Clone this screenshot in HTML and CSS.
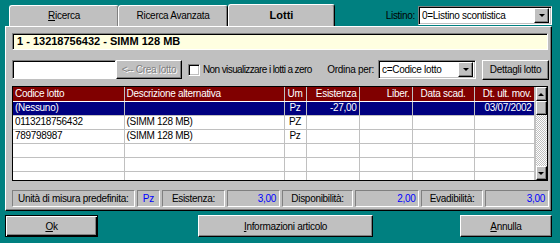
FILE: index.html
```html
<!DOCTYPE html>
<html lang="it">
<head>
    <meta charset="UTF-8">
    <title>Lotti</title>
    <link rel="stylesheet" href="styles.css">
</head>
<body>
    <div class="dialog">
        <div class="tabbar">
            <div class="tab"><u>R</u>icerca</div>
            <div class="tab">Ricerca Avanzata</div>
            <div class="tab active">Lotti</div>
            <div class="listino">
                <span>Listino:</span>
                <div class="combo wide">
                    <span class="combo-text">0=Listino scontistica</span>
                    <span class="drop"><i></i></span>
                </div>
            </div>
        </div>
        <div class="panel">
            <div class="article">1 - 13218756432 - SIMM 128 MB</div>
            <div class="toolbar">
                <div class="field"></div>
                <div class="btn disabled">&lt;-- Crea lotto</div>
                <label class="check"><span class="box"></span>Non visualizzare i lotti a zero</label>
                <span class="sort-label">Ordina per:</span>
                <div class="combo sort">
                    <span class="combo-text">c=Codice lotto</span>
                    <span class="drop"><i></i></span>
                </div>
                <div class="btn details">Dettagli lotto</div>
            </div>
            <div class="grid">
                <table>
                    <colgroup>
                        <col style="width:111px">
                        <col style="width:160px">
                        <col style="width:22px">
                        <col style="width:53px">
                        <col style="width:53px">
                        <col style="width:62px">
                        <col style="width:60px">
                    </colgroup>
                    <thead>
                        <tr>
                            <th>Codice lotto</th>
                            <th>Descrizione alternativa</th>
                            <th class="c">Um</th>
                            <th class="r">Esistenza</th>
                            <th class="r">Liber.</th>
                            <th class="c">Data scad.</th>
                            <th class="r">Dt. ult. mov.</th>
                        </tr>
                    </thead>
                    <tbody>
                        <tr class="sel">
                            <td>(Nessuno)</td><td></td><td class="c">Pz</td><td class="r">-27,00</td><td></td><td></td><td class="r">03/07/2002</td>
                        </tr>
                        <tr>
                            <td>0113218756432</td><td>(SIMM 128 MB)</td><td class="c">PZ</td><td></td><td></td><td></td><td></td>
                        </tr>
                        <tr>
                            <td>789798987</td><td>(SIMM 128 MB)</td><td class="c">Pz</td><td></td><td></td><td></td><td></td>
                        </tr>
                        <tr><td></td><td></td><td></td><td></td><td></td><td></td><td></td></tr>
                        <tr><td></td><td></td><td></td><td></td><td></td><td></td><td></td></tr>
                        <tr><td></td><td></td><td></td><td></td><td></td><td></td><td></td></tr>
                    </tbody>
                </table>
                <div class="vscroll">
                    <div class="sbtn"><i class="up"></i></div>
                    <div class="thumb"></div>
                    <div class="track"></div>
                    <div class="sbtn"><i></i></div>
                </div>
            </div>
            <div class="status">
                <div class="cell lbl w-um">Unità di misura predefinita:</div>
                <div class="cell val w-pz">Pz</div>
                <div class="cell lbl w-es">Esistenza:</div>
                <div class="cell val num w-n1">3,00</div>
                <div class="cell lbl w-disp">Disponibilità:</div>
                <div class="cell val num w-n2">2,00</div>
                <div class="cell lbl w-ev">Evadibilità:</div>
                <div class="cell val num w-n3">3,00</div>
            </div>
        </div>
        <div class="actions">
            <div class="btn big default"><u>O</u>k</div>
            <div class="btn big info"><u>I</u>nformazioni articolo</div>
            <div class="btn big cancel"><u>A</u>nnulla</div>
        </div>
    </div>
</body>
</html>
```

FILE: styles.css
```css
*{
    margin:0;
    padding:0;
    box-sizing: border-box;
}
body{
    width:560px;
    height:243px;
    background:#008080;
    font-family:"Liberation Sans", Arial, sans-serif;
    font-size:10px;
    letter-spacing:-0.3px;
    color:#000;
    white-space:nowrap;
    overflow:hidden;
}
.dialog{
    width:560px;
    height:243px;
    display:flex;
    flex-direction:column;
}
/* tabs */
.tabbar{
    display:flex;
    align-items:flex-end;
    height:26px;
    padding-left:9px;
    padding-right:8px;
}
.tab{
    width:110px;
    height:21px;
    margin-right:-1px;
    background:#c0c0c0;
    border-top:1px solid #fff;
    border-left:1px solid #fff;
    border-right:1px solid #000;
    border-radius:3px 3px 0 0;
    box-shadow: inset -1px 0 0 #808080;
    display:flex;
    justify-content:center;
    align-items:center;
    padding-bottom:1px;
}
.tab.active{
    width:107px;
    height:23px;
    margin-left:1px;
    font-size:11px;
    letter-spacing:0;
    font-weight:700;
    margin-bottom:-1px;
    padding-bottom:2px;
}
.listino{
    margin-left:auto;
    align-self:center;
    display:flex;
    align-items:center;
    gap:3px;
    margin-top:4px;
}
.combo{
    height:19px;
    background:#fff;
    border-top:1px solid #808080;
    border-left:1px solid #808080;
    border-right:1px solid #fff;
    border-bottom:1px solid #fff;
    box-shadow: inset 1px 1px 0 #000, inset -1px -1px 0 #c0c0c0;
    display:flex;
    align-items:center;
    padding:0 2px 0 3px;
}
.combo.wide{
    width:134px;
}
.combo-text{
    flex:1;
}
.drop{
    width:15px;
    height:15px;
    background:#c0c0c0;
    border-top:1px solid #fff;
    border-left:1px solid #fff;
    border-right:1px solid #000;
    border-bottom:1px solid #000;
    box-shadow: inset -1px -1px 0 #808080;
    display:flex;
    justify-content:center;
    align-items:center;
}
.drop i, .sbtn i{
    width:0;
    height:0;
    border-left:3px solid transparent;
    border-right:3px solid transparent;
    border-top:3px solid #000;
}
.sbtn i.up{
    border-top:none;
    border-bottom:3px solid #000;
}
/* panel */
.panel{
    margin:0 8px 0 5px;
    height:185px;
    background:#c0c0c0;
    border-top:1px solid #fff;
    border-left:1px solid #fff;
    border-right:1px solid #000;
    border-bottom:1px solid #000;
    box-shadow: inset -1px -1px 0 #808080;
    padding:6px 2px 0 6px;
}
.article{
    height:17px;
    width:536px;
    background:#ffffe1;
    border-top:1px solid #808080;
    border-left:1px solid #808080;
    border-right:1px solid #fff;
    border-bottom:1px solid #fff;
    box-shadow: inset 1px 1px 0 #000;
    font-weight:700;
    font-size:11px;
    letter-spacing:0;
    padding-left:4px;
    line-height:14px;
}
.toolbar{
    margin-top:10px;
    height:19px;
    width:537px;
    display:flex;
    align-items:center;
}
.field{
    width:104px;
    height:19px;
    background:#fff;
    border-top:1px solid #808080;
    border-left:1px solid #808080;
    border-right:1px solid #fff;
    border-bottom:1px solid #fff;
    box-shadow: inset 1px 1px 0 #000;
}
.btn{
    background:#c0c0c0;
    border-top:1px solid #fff;
    border-left:1px solid #fff;
    border-right:1px solid #000;
    border-bottom:1px solid #000;
    box-shadow: inset -1px -1px 0 #808080;
    display:flex;
    justify-content:center;
    align-items:center;
}
.btn.disabled{
    width:66px;
    height:19px;
    color:#808080;
    text-shadow:1px 1px 0 #fff;
}
.check{
    display:flex;
    align-items:center;
    margin-left:6px;
    gap:3px;
    letter-spacing:-0.6px;
}
.box{
    width:12px;
    height:12px;
    background:#fff;
    border-top:1px solid #808080;
    border-left:1px solid #808080;
    border-right:1px solid #fff;
    border-bottom:1px solid #fff;
    box-shadow: inset 1px 1px 0 #000, inset -1px -1px 0 #c0c0c0;
}
.sort-label{
    margin-left:auto;
    margin-right:4px;
}
.combo.sort{
    width:98px;
}
.btn.details{
    width:67px;
    height:20px;
    margin-left:6px;
}
/* grid */
.grid{
    margin-top:7px;
    width:536px;
    height:95px;
    border:1px solid #000;
    background:#fff;
    display:flex;
    overflow:hidden;
}
table{
    table-layout:fixed;
    width:521px;
    border-collapse:collapse;
}
th{
    height:14px;
    background:#800000;
    color:#fff;
    font-weight:400;
    text-align:left;
    padding:0 2px;
    border-right:1px solid #c0c0c0;
    border-bottom:1px solid #fff;
    overflow:hidden;
    line-height:12px;
}
td{
    height:14px;
    padding:0 2px;
    border-right:1px solid #c0c0c0;
    border-bottom:1px solid #c0c0c0;
    overflow:hidden;
    line-height:12px;
}
.c{
    text-align:center;
}
.r{
    text-align:right;
}
tr.sel td{
    background:#000080;
    color:#fff;
}
.vscroll{
    width:14px;
    display:flex;
    flex-direction:column;
    border-left:1px solid #c0c0c0;
}
.sbtn, .thumb{
    height:14px;
    background:#c0c0c0;
    border-top:1px solid #fff;
    border-left:1px solid #fff;
    border-right:1px solid #000;
    border-bottom:1px solid #000;
    box-shadow: inset -1px -1px 0 #808080;
    display:flex;
    justify-content:center;
    align-items:center;
}
.track{
    flex:1;
    background-color:#fff;
    background-image:
        linear-gradient(45deg, #c0c0c0 25%, transparent 25%, transparent 75%, #c0c0c0 75%),
        linear-gradient(45deg, #c0c0c0 25%, transparent 25%, transparent 75%, #c0c0c0 75%);
    background-size:2px 2px;
    background-position:0 0, 1px 1px;
}
/* status */
.status{
    margin-top:9px;
    display:flex;
    gap:2px;
    height:17px;
}
.cell{
    border-top:1px solid #808080;
    border-left:1px solid #808080;
    border-right:1px solid #fff;
    border-bottom:1px solid #fff;
    display:flex;
    align-items:center;
    padding:0 3px;
}
.lbl{
    justify-content:center;
}
.val{
    color:#0000ff;
    justify-content:center;
}
.num{
    justify-content:flex-end;
}
.w-um{ width:124px; }
.w-pz{ width:24px; }
.w-es{ width:63px; }
.w-n1{ width:54px; }
.w-disp{ width:72px; }
.w-n2{ width:65px; }
.w-ev{ width:62px; }
.w-n3{ width:65px; }
/* bottom buttons */
.actions{
    display:flex;
    padding:4px 8px 0 5px;
}
.btn.big{
    height:22px;
    width:93px;
}
.btn.default{
    border:1px solid #000;
    box-shadow: inset 1px 1px 0 #fff, inset -1px -1px 0 #000, inset -2px -2px 0 #808080;
}
.btn.info{
    width:175px;
    margin-left:100px;
}
.btn.cancel{
    width:92px;
    margin-left:auto;
}
```
